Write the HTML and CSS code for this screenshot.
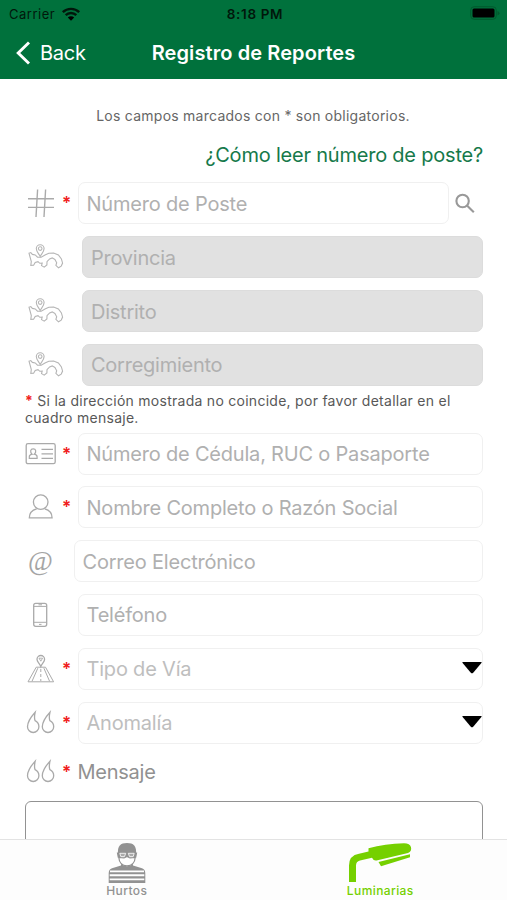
FILE: index.html
```
<!DOCTYPE html>
<html lang="es">
<head>
<meta charset="utf-8">
<title>Registro de Reportes</title>
<link rel="stylesheet" href="styles.css">
</head>
<body>
<svg class="defs" width="0" height="0" aria-hidden="true">
  <symbol id="map" viewBox="0 0 36 28">
    <path d="M1 10.2l1.8-.6 1.6 1.8 2.8.5 2.3 2.3h3.7l3.8-2.2 3.8-1.8 4.8-.1 4.8 1.8 3 4 1.2 4.2-1.4 3-2.7 1.7-2.6-2.4.8-2.7-1.8-3.2-2.7-1.6-2.6 1-2.6 2.8-.1 3.2-2.7 2.3-2.7-1.6.7-2.5-2.4.2-1.8-1.6-2.8.8-1.6 2.8-2.8.1.5-3.8z"/>
    <path d="M12.2 13.5c-1.4-3-3.9-4.8-3.9-7.9a3.9 3.9 0 0 1 7.8 0c0 3.1-2.5 4.9-3.9 7.9z"/><circle cx="12.2" cy="5.6" r="1.8"/>
  </symbol>
  <symbol id="quotes" viewBox="0 0 30 26">
    <path d="M9.7 2.2C5 7.3 2 12 2 16.8a5.7 5.7 0 0 0 11.4 0c0-3.2-1.8-5.1-3.8-6.1C8.5 8 9 5.2 9.7 2.2z"/>
    <path d="M24.5 2.2c-4.7 5.1-7.7 9.8-7.7 14.6a5.7 5.7 0 0 0 11.4 0c0-3.2-1.8-5.1-3.8-6.1-1.1-2.7-.6-5.5.1-8.5z"/>
  </symbol>
</svg>
<div class="phone">
  <header class="header">
    <div class="status">
      <div class="carrier"><span>Carrier</span>
        <svg width="20" height="15" viewBox="0 0 20 15"><path d="M1.8 5.2a11.7 11.7 0 0 1 16.4 0M4.7 8.2a7.5 7.5 0 0 1 10.6 0" fill="none" stroke="#00170b" stroke-width="2.4"/><path d="M6.8 10.5a4.6 4.6 0 0 1 6.4 0L10 13.7z"/></svg>
      </div>
      <span class="clock">8:18 PM</span>
      <svg class="battery" width="31" height="15" viewBox="0 0 31 15"><rect x=".7" y=".7" width="25.6" height="12.6" rx="3.5" fill="none" stroke="#005a2e"/><rect x="2.5" y="2.5" width="22" height="9" rx="1.5"/><path d="M27.5 5v4.5q2-.8 2-2.2t-2-2.3z" fill="#005a2e"/></svg>
    </div>
    <nav class="navbar">
      <div class="back"><svg width="16" height="24" viewBox="0 0 16 24"><path d="M14 1.5L3.2 12 14 22.5" fill="none" stroke="#fff" stroke-width="2.9"/></svg><span>Back</span></div>
      <h1 class="title">Registro de Reportes</h1>
    </nav>
  </header>
  <main class="content">
    <p class="intro">Los campos marcados con * son obligatorios.</p>
    <p class="help"><span>¿Cómo leer número de poste?</span></p>
    <div class="rows">
      <div class="row">
        <svg class="icon" viewBox="0 0 31 32"><path d="M3 11.8h26M3 20.4h26M12.6 2.5L11 30M20.6 2.5L19 30" stroke-width="1.4"/></svg>
        <b class="star">*</b>
        <div class="field"><span>Número de Poste</span></div>
        <svg class="search" width="34" height="24" viewBox="0 0 34 24"><circle cx="13.6" cy="10" r="6.2"/><path d="M18 14.5l6.8 6.8"/></svg>
      </div>
      <div class="row area"><svg class="mapicon"><use href="#map"/></svg><div class="field"><span>Provincia</span></div></div>
      <div class="row area"><svg class="mapicon"><use href="#map"/></svg><div class="field"><span>Distrito</span></div></div>
      <div class="row area"><svg class="mapicon"><use href="#map"/></svg><div class="field"><span>Corregimiento</span></div></div>
    </div>
    <p class="note"><b>*</b> <span>Si la dirección mostrada no coincide, por favor detallar en el</span><br><span>cuadro mensaje.</span></p>
    <div class="rows">
      <div class="row">
        <svg class="icon" viewBox="0 0 31 32"><rect x="1.2" y="5.7" width="29" height="20" rx="1.8"/><path d="M16.5 11.3H28M16.5 15.8H28M16.5 20.4H28M4.3 20.3v-1.6q0-1.7 2.8-2.5c-2.4-2.2-1.7-5.4 1.1-5.4s3.5 3.2 1.1 5.4q2.8.8 2.8 2.5v1.6z" stroke-width="1.2"/></svg>
        <b class="star">*</b>
        <div class="field"><span>Número de Cédula, RUC o Pasaporte</span></div>
      </div>
      <div class="row">
        <svg class="icon" viewBox="0 0 31 32"><circle cx="15.7" cy="11.1" r="7.3"/><path d="M11.7 17.8C7 19 4.3 22 4.3 26.9h22.8c0-4.9-2.7-7.9-7.4-9.1"/></svg>
        <b class="star">*</b>
        <div class="field"><span>Nombre Completo o Razón Social</span></div>
      </div>
      <div class="row email">
        <span class="at">@</span>
        <div class="field"><span>Correo Electrónico</span></div>
      </div>
      <div class="row">
        <svg class="icon" viewBox="0 0 31 32"><rect x="8.7" y="4.3" width="13" height="23" rx="2"/><path d="M8.7 7.4h13M8.7 23.3h13M14 25.4h2.5M13.5 5.8h3.5" stroke-width="1"/></svg>
        <b class="star"></b>
        <div class="field"><span>Teléfono</span></div>
      </div>
      <div class="row">
        <svg class="icon" viewBox="0 0 31 32"><path d="M11.2 14.2L3 28.8h25.6l-8.1-14.6z M12.8 15.2L7 28.3M18.9 15.2l5.7 13.1" stroke-width="1"/><path d="M15.8 16v12" stroke-dasharray="3 2" stroke-width="1"/><path d="M15.8 13.5c-1.1-3.1-3.8-4.5-3.8-7.2a3.8 3.8 0 0 1 7.6 0c0 2.7-2.7 4.1-3.8 7.2z"/><path d="M14 5.2l1.8 3 1.8-3z" stroke-width=".9"/></svg>
        <b class="star">*</b>
        <div class="field select"><span>Tipo de Vía</span><svg class="caret" width="20" height="12" viewBox="0 0 20 12"><path d="M.4.8Q0 0 1.1 0h17.8q1.1 0 .7.8L11.2 10.7q-1.2 1.2-2.4 0z"/></svg></div>
      </div>
      <div class="row">
        <svg class="icon quote"><use href="#quotes"/></svg>
        <b class="star">*</b>
        <div class="field select"><span>Anomalía</span><svg class="caret" width="20" height="12" viewBox="0 0 20 12"><path d="M.4.8Q0 0 1.1 0h17.8q1.1 0 .7.8L11.2 10.7q-1.2 1.2-2.4 0z"/></svg></div>
      </div>
    </div>
    <div class="row message">
      <svg class="icon quote"><use href="#quotes"/></svg>
      <b class="star">*</b>
      <span class="label">Mensaje</span>
    </div>
    <div class="textarea"></div>
  </main>
  <footer class="tabs">
    <div class="tab">
      <svg width="40" height="42" viewBox="0 0 40 42">
        <path d="M11 12C10.2 4 13.5 1 20 1s9.8 3 9 11z" fill="#929292"/>
        <path d="M9.8 10.5h20.4l-1 5.3H10.8z" fill="#929292"/>
        <path d="M11.8 15.5c.3 4.5 3 8.3 8.2 8.3s7.9-3.8 8.2-8.3l-5.2.5-3-1.5-3 1.5z" fill="#fff" stroke="#929292" stroke-width="1.2"/>
        <path d="M12.8 11.3h5.9l-1.2 3.3h-3.7zM21.3 11.3h5.9l-1 3.3h-3.7z" fill="#aaa" stroke="#fff" stroke-width=".8"/>
        <path d="M14 21.7v1.8L5 26.2q-3.3 1-3.3 5V41h36.6v-9.8q0-4-3.3-5l-9-2.7v-1.8Q20 27 14 21.7z" fill="#929292"/>
        <path d="M3 29.4h34M2.7 33.3h34.6M2.7 37.4h34.6" stroke="#fff" stroke-width="1.9"/>
      </svg>
      <span>Hurtos</span>
    </div>
    <div class="tab active">
      <svg width="66" height="42" viewBox="0 0 66 42">
        <path d="M2 40V23.5Q2 13.5 12 11.8L21.5 9.5V6.3Q38 1.8 57 1.3q6 0 7 4t-3 5.7L29.5 18.5q-3 .5-4.5-2.8L13 18.5q-4 1-4 5V40z"/>
        <path d="M31.5 20L63 12.3v3L34 24.3z"/>
      </svg>
      <span>Luminarias</span>
    </div>
  </footer>
</div>
</body>
</html>
```
FILE: styles.css
```
* { box-sizing: border-box; }
body { margin: 0; font-family: Inter, "Liberation Sans", sans-serif; background: #fff; }
p, h1 { margin: 0; }
.defs { position: absolute; }
span { white-space: nowrap; }
.phone { width: 507px; height: 900px; overflow: hidden; display: flex; flex-direction: column; }

.header { height: 79px; flex: none; background: #00713c; }
.status { height: 28px; padding: 0 6px 0 9px; display: grid; grid-template-columns: 1fr auto 1fr; align-items: center; font-size: 13px; color: #00170b; }
.carrier { display: flex; align-items: center; gap: 6px; }
.carrier span { letter-spacing: .5px; }
.clock { font-weight: 600; font-size: 13.5px; letter-spacing: .65px; }
.battery { justify-self: end; margin-bottom: 1px; }
.navbar { height: 51px; padding: 0 15px; display: grid; grid-template-columns: 1fr auto 1fr; align-items: center; color: #fff; }
.back { display: flex; align-items: center; gap: 9px; font-size: 20px; letter-spacing: -.25px; padding-bottom: 2px; }
.title { font-size: 20px; font-weight: 600; letter-spacing: .1px; padding-bottom: 2px; white-space: nowrap; }

.content { flex: 1; min-height: 0; overflow: hidden; padding: 27px 24px 0 25px; }
.intro { height: 20px; line-height: 20px; font-size: 14px; color: #666; text-align: center; padding-right: 2px; letter-spacing: .25px; }
.help { margin-top: 16px; height: 26px; line-height: 26px; font-size: 20px; letter-spacing: -.21px; text-align: right; color: #16794a; }
.rows { display: grid; grid-auto-rows: 41.8px; gap: 12px; }
.help + .rows { margin-top: 14.5px; }
.row { display: flex; align-items: center; }
.icon { width: 31px; height: 32px; flex: none; fill: none; stroke: #aaa; stroke-width: 1.3; }
.quote { height: 26px; }
.mapicon { width: 36px; height: 28px; margin: 0 18px 0 3px; flex: none; fill: none; stroke: #b5b5b5; stroke-width: 1.1; }
.star { width: 21.5px; height: 22px; flex: none; padding-left: 6px; line-height: 23px; font-size: 17px; color: #f02020; text-align: left; font-weight: 600; }
.field { flex: 1; height: 42px; border: 1.4px solid #f0f0f0; border-radius: 7px; padding: 1px 0 0 8px; display: flex; align-items: center; font-size: 20px; letter-spacing: -.2px; color: #b0b0b0; }
.search { flex: none; fill: none; stroke: #999; stroke-width: 2.1; }
.area .field { background: #e1e1e1; border-color: #dcdcdc; letter-spacing: -.25px; }
.at { width: 31px; text-align: center; font: 27px/27px "Liberation Serif", serif; color: #a5a5a5; }
.email .at { margin-right: 17.5px; }
.select { justify-content: space-between; color: #bebebe; }
.caret { margin-bottom: 2px; }
.note { height: 47px; padding-top: 6px; line-height: 17px; font-size: 14px; letter-spacing: .27px; color: #585858; }
.note b { color: #f02020; }
.message { margin-top: 12px; height: 34px; }
.label { color: #919191; font-size: 20px; letter-spacing: -.25px; }
.textarea { margin-top: 12px; height: 120px; border: 1.8px solid #929292; border-radius: 6px; }

.tabs { height: 61px; flex: none; display: grid; grid-template-columns: 1fr 1fr; border-top: 1.5px solid #e3e3e3; background: #fdfdfd; }
.tab { display: flex; flex-direction: column; align-items: center; padding-top: 2px; font-size: 12px; color: #929292; font-weight: 500; line-height: 14px; letter-spacing: .4px; }
.active { color: #75d000; fill: #75d000; }
```
